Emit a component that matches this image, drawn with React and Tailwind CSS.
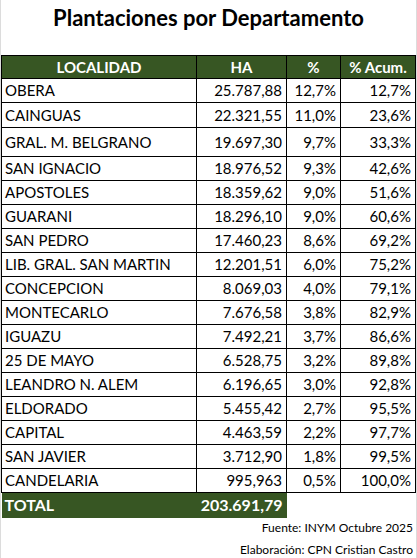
const rows = [
  ['OBERA', '25.787,88', '12,7%', '12,7%', 'h-[24px]'],
  ['CAINGUAS', '22.321,55', '11,0%', '23,6%', 'h-[25px]'],
  ['GRAL. M. BELGRANO', '19.697,30', '9,7%', '33,3%', 'h-[29px] pt-[4px]'],
  ['SAN IGNACIO', '18.976,52', '9,3%', '42,6%', 'h-[24px]'],
  ['APOSTOLES', '18.359,62', '9,0%', '51,6%', 'h-[24px]'],
  ['GUARANI', '18.296,10', '9,0%', '60,6%', 'h-[24px]'],
  ['SAN PEDRO', '17.460,23', '8,6%', '69,2%', 'h-[24px]'],
  ['LIB. GRAL. SAN MARTIN', '12.201,51', '6,0%', '75,2%', 'h-[24px]'],
  ['CONCEPCION', '8.069,03', '4,0%', '79,1%', 'h-[24px]'],
  ['MONTECARLO', '7.676,58', '3,8%', '82,9%', 'h-[24px]'],
  ['IGUAZU', '7.492,21', '3,7%', '86,6%', 'h-[24px]'],
  ['25 DE MAYO', '6.528,75', '3,2%', '89,8%', 'h-[24px]'],
  ['LEANDRO N. ALEM', '6.196,65', '3,0%', '92,8%', 'h-[24px]'],
  ['ELDORADO', '5.455,42', '2,7%', '95,5%', 'h-[24px]'],
  ['CAPITAL', '4.463,59', '2,2%', '97,7%', 'h-[24px]'],
  ['SAN JAVIER', '3.712,90', '1,8%', '99,5%', 'h-[24px]'],
  ['CANDELARIA', '995,963', '0,5%', '100,0%', 'h-[24px]'],
];

export default function App() {
  return (
    <div
      className="w-[417px] h-[558px] bg-white border-l border-r border-[#dcdcdc] text-black overflow-hidden"
      style={{ fontFamily: 'Lato, "Open Sans", sans-serif' }}
    >
      <div className="h-[55px] pt-[5px] text-center text-[22px] font-bold leading-[26px]">
        Plantaciones por Departamento
      </div>

      <table className="border-collapse w-[414px] table-fixed text-[15px] leading-none">
        <colgroup>
          <col className="w-[195px]" />
          <col className="w-[90px]" />
          <col className="w-[54px]" />
          <col className="w-[75px]" />
        </colgroup>
        <thead>
          <tr className="h-[23px] bg-[#375623] text-white font-bold">
            <th className="border border-black text-center">LOCALIDAD</th>
            <th className="border border-black text-center">HA</th>
            <th className="border border-black text-center">%</th>
            <th className="border border-black text-center">% Acum.</th>
          </tr>
        </thead>
        <tbody>
          {rows.map(([name, ha, pct, acc, h]) => (
            <tr key={name} className={h}>
              <td className="border border-black pl-[3px] whitespace-nowrap">{name}</td>
              <td className="border border-black pr-[4px] text-right">{ha}</td>
              <td className="border border-black pr-[4px] text-right">{pct}</td>
              <td className="border border-black pr-[4px] text-right">{acc}</td>
            </tr>
          ))}
          <tr className="h-[25px] font-bold text-white text-[16px]">
            <td className="bg-[#375623] pl-[3px]">TOTAL</td>
            <td className="bg-[#375623] pr-[4px] text-right">203.691,79</td>
            <td></td>
            <td></td>
          </tr>
        </tbody>
      </table>

      <div className="pr-[3px] -mt-[1px] text-right text-[12px] leading-[22px]">
        <div>Fuente: INYM Octubre 2025</div>
        <div>Elaboración: CPN Cristian Castro</div>
      </div>
    </div>
  );
}
